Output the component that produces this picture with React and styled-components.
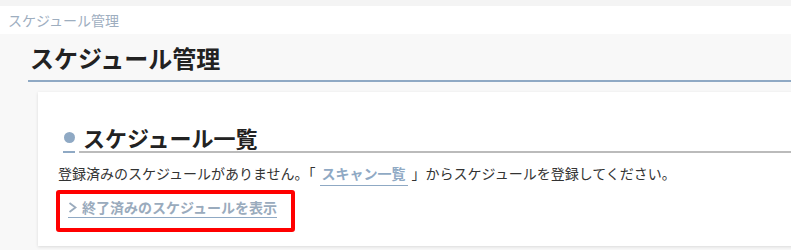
import React from "react";
import styled, { createGlobalStyle } from "styled-components";

const GlobalStyle = createGlobalStyle`
  body {
    margin: 0;
    background-color: #f8f8f8;
    font-family: "Noto Sans CJK JP", "Noto Sans", sans-serif;
    color: #333;
    overflow: hidden;
  }
`;

const Page = styled.div`
  padding-top: 6px;
  background-color: #f4f4f4;
`;

const Breadcrumb = styled.nav`
  background-color: #fff;
  height: 28px;
  line-height: 28px;
  padding-left: 8px;
  font-size: 14px;
  color: #9eaebf;
`;

const Main = styled.main`
  background-color: #f8f8f8;
  padding: 0 0 4px 28px;
`;

const PageTitle = styled.h1`
  margin: 0;
  padding: 9px 2px 7px;
  font-size: 24px;
  line-height: 30px;
  font-weight: 700;
  color: #222;
  border-bottom: 2px solid #8fa9c4;
`;

const Card = styled.section`
  margin: 10px -20px 0 10px;
  padding: 31px 20px 14px;
  background-color: #fff;
  box-shadow: 0 1px 3px rgba(0, 0, 0, 0.12);
`;

const SectionHeading = styled.h2`
  display: flex;
  margin: 0 0 0 5px;
  font-size: 22px;
  line-height: 28px;
  font-weight: 700;
  color: #222;
`;

const Bullet = styled.span`
  display: flex;
  align-items: center;
  justify-content: center;
  width: 12px;
  border-bottom: 2px solid #8fa9c4;

  &::before {
    content: "";
    width: 11px;
    height: 11px;
    border-radius: 50%;
    background-color: #8fa9c4;
  }
`;

const HeadingText = styled.span`
  flex: 1;
  margin-left: 4px;
  padding-left: 4px;
  border-bottom: 2px solid #bbb;
`;

const Message = styled.p`
  margin: 10px 0 0;
  font-size: 14px;
  line-height: 20px;
`;

const Link = styled.a`
  margin: 0 4px;
  padding: 0 2px 2px;
  color: #8fa9c4;
  font-weight: 700;
  text-decoration: none;
  border-bottom: 1px solid #8fa9c4;
`;

const Highlight = styled.div`
  display: inline-block;
  margin: 7px 0 0 -2px;
  padding: 3px 14px 10px 8px;
  border: 4px solid #ff0000;
  border-radius: 3px;
`;

const Toggle = styled.a`
  display: flex;
  align-items: center;
  gap: 5px;
  font-size: 14px;
  line-height: 20px;
  font-weight: 700;
  color: #9aabbd;
  border-bottom: 1px solid #8fa9c4;
  text-decoration: none;
`;

const Chevron = () => (
  <svg width="9" height="13" viewBox="0 0 9 13">
    <path d="M1.5 2 L7.5 6.5 L1.5 11" fill="none" stroke="#9aabbd" strokeWidth="1.8" />
  </svg>
);

const App = () => {
  return (
    <Page>
      <GlobalStyle />
      <Breadcrumb>スケジュール管理</Breadcrumb>
      <Main>
        <PageTitle>スケジュール管理</PageTitle>
        <Card>
          <SectionHeading>
            <Bullet />
            <HeadingText>スケジュール一覧</HeadingText>
          </SectionHeading>
          <Message>
            登録済みのスケジュールがありません。「<Link href="#">スキャン一覧</Link>」からスケジュールを登録してください。
          </Message>
          <Highlight>
            <Toggle href="#">
              <Chevron />
              終了済みのスケジュールを表示
            </Toggle>
          </Highlight>
        </Card>
      </Main>
    </Page>
  );
};

export default App;
